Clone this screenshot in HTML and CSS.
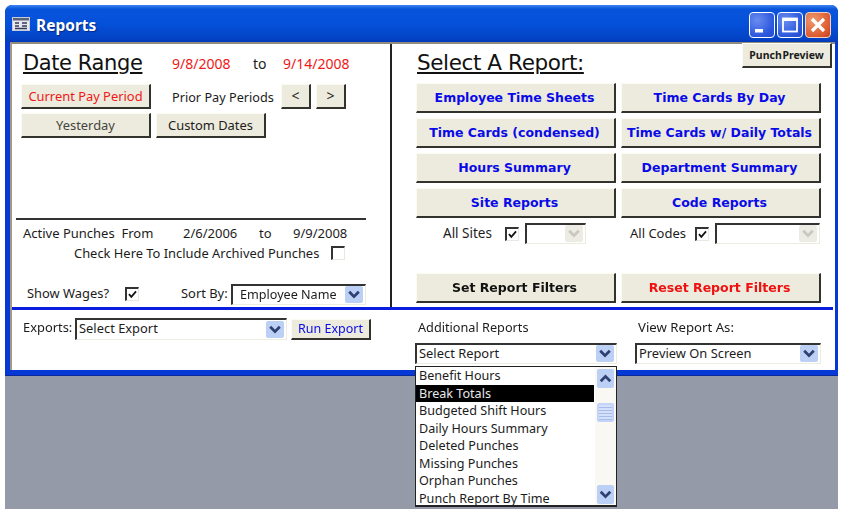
FILE: index.html
```html
<!DOCTYPE html>
<html lang="en">
<head>
<meta charset="utf-8">
<title>Reports</title>
<link rel="stylesheet" href="styles.css">
</head>
<body>
<svg class="defs" width="0" height="0" aria-hidden="true">
  <symbol id="chev-down" viewBox="0 0 16 16"><path d="M3.5 5.5 8 10l4.500-4.500" fill="none" stroke="currentColor" stroke-width="2.600"/></symbol>
  <symbol id="chev-up" viewBox="0 0 16 16"><path d="M3.500 10.500 8 6l4.500 4.500" fill="none" stroke="currentColor" stroke-width="2.600"/></symbol>
  <symbol id="tick" viewBox="0 0 14 14"><path d="M2.500 6.500 5.500 10 11.500 3" fill="none" stroke="#111" stroke-width="2.200"/></symbol>
</svg>
<main class="desktop">
  <section class="window">
    <header class="titlebar">
      <svg class="app-icon" viewBox="0 0 18 14" aria-hidden="true"><rect x=".5" y=".5" width="17" height="13" fill="#e8e8f0" stroke="#c8ccd8"/><rect x="1" y="1" width="16" height="2.500" fill="#5a6478"/><path d="M3 6h4M3 9h4M10 6h5M10 9h5M3 11.500h12" stroke="#333c55" stroke-width="1.300"/></svg>
      <h1 class="title">Reports</h1>
      <div class="win-buttons">
        <span class="win-btn win-min"><svg viewBox="0 0 24 24"><rect x="5" y="16" width="8" height="3.500" fill="#fff"/></svg></span>
        <span class="win-btn win-max"><svg viewBox="0 0 24 24"><rect x="5" y="5.500" width="14" height="13" fill="none" stroke="#fff" stroke-width="1.800"/><rect x="5" y="5" width="14" height="3" fill="#fff"/></svg></span>
        <span class="win-btn win-close"><svg viewBox="0 0 24 24"><path d="M6 6l12 12M18 6 6 18" stroke="#fff" stroke-width="3.200"/></svg></span>
      </div>
    </header>
    <div class="client">
      <div class="top">
        <div class="left-panel">
          <div class="date-head">
            <h2 class="heading date-title">Date Range</h2>
            <span class="red date-from">9/8/2008</span>
            <span class="date-to">to</span>
            <span class="red date-end">9/14/2008</span>
          </div>
          <div class="row row-pay">
            <button class="btn btn-wide red">Current Pay Period</button>
            <span class="prior">Prior Pay Periods</span>
            <button class="btn btn-arrow">&lt;</button>
            <button class="btn btn-arrow">&gt;</button>
          </div>
          <div class="row row-days">
            <button class="btn btn-wide muted">Yesterday</button>
            <button class="btn btn-custom">Custom Dates</button>
          </div>
          <div class="punches">
            <div class="active">
              <span class="active-label">Active Punches&nbsp; From</span>
              <span class="active-from">2/6/2006</span>
              <span class="active-to">to</span>
              <span>9/9/2008</span>
            </div>
            <div class="archive">
              <span>Check Here To Include Archived Punches</span>
              <span class="check"></span>
            </div>
          </div>
          <div class="sort-row">
            <span class="wages">Show Wages?</span>
            <span class="check checked"><svg viewBox="0 0 14 14"><use href="#tick"/></svg></span>
            <span class="sort-label">Sort By:</span>
            <div class="combo combo-sort"><span>Employee Name</span><i class="drop"><svg><use href="#chev-down"/></svg></i></div>
          </div>
        </div>
        <div class="right-panel">
          <div class="report-head">
            <h2 class="heading report-title">Select A Report:</h2>
            <button class="btn btn-preview">Punch Preview</button>
          </div>
          <div class="report-grid">
            <button class="btn btn-report">Employee Time Sheets</button>
            <button class="btn btn-report">Time Cards By Day</button>
            <button class="btn btn-report">Time Cards (condensed)</button>
            <button class="btn btn-report">Time Cards w/ Daily Totals</button>
            <button class="btn btn-report">Hours Summary</button>
            <button class="btn btn-report">Department Summary</button>
            <button class="btn btn-report">Site Reports</button>
            <button class="btn btn-report">Code Reports</button>
          </div>
          <div class="filter-grid">
            <div class="filter filter-sites">
              <span class="filter-label">All Sites</span>
              <span class="check checked"><svg viewBox="0 0 14 14"><use href="#tick"/></svg></span>
              <div class="combo combo-off"><i class="drop drop-off"><svg><use href="#chev-down"/></svg></i></div>
            </div>
            <div class="filter filter-codes">
              <span class="filter-label">All Codes</span>
              <span class="check checked"><svg viewBox="0 0 14 14"><use href="#tick"/></svg></span>
              <div class="combo combo-off combo-codes"><i class="drop drop-off"><svg><use href="#chev-down"/></svg></i></div>
            </div>
          </div>
          <div class="set-grid">
            <button class="btn btn-report btn-set">Set Report Filters</button>
            <button class="btn btn-report btn-reset">Reset Report Filters</button>
          </div>
        </div>
      </div>
      <div class="bottom">
        <div class="exports">
          <span class="exports-label">Exports:</span>
          <div class="combo combo-export"><span>Select Export</span><i class="drop"><svg><use href="#chev-down"/></svg></i></div>
          <button class="btn btn-run">Run Export</button>
        </div>
        <div class="additional">
          <span class="field-label">Additional Reports</span>
          <div class="combo combo-report"><span>Select Report</span><i class="drop"><svg><use href="#chev-down"/></svg></i></div>
          <div class="listbox">
            <ul class="list-items">
              <li>Benefit Hours</li>
              <li class="selected">Break Totals</li>
              <li>Budgeted Shift Hours</li>
              <li>Daily Hours Summary</li>
              <li>Deleted Punches</li>
              <li>Missing Punches</li>
              <li>Orphan Punches</li>
              <li>Punch Report By Time</li>
            </ul>
            <div class="scrollbar">
              <i class="drop scroll-btn"><svg><use href="#chev-up"/></svg></i>
              <i class="scroll-thumb"></i>
              <i class="drop scroll-btn scroll-end"><svg><use href="#chev-down"/></svg></i>
            </div>
          </div>
        </div>
        <div class="view-as">
          <span class="field-label field-view">View Report As:</span>
          <div class="combo combo-view"><span>Preview On Screen</span><i class="drop"><svg><use href="#chev-down"/></svg></i></div>
        </div>
      </div>
    </div>
  </section>
  <div class="workspace"></div>
</main>
</body>
</html>
```

FILE: styles.css
```css
* { box-sizing: border-box; }
html, body { margin: 0; padding: 0; background: #fff; }
body { width: 844px; height: 509px; overflow: hidden; font: 12.900px/1.2 "Noto Sans", Tahoma, sans-serif; color: #1c1c1c; }
.defs { position: absolute; }
h1, h2, ul { margin: 0; padding: 0; }
.desktop { padding: 5px 6px 0 5px; height: 509px; display: flex; flex-direction: column; filter: blur(.35px); }
.window { height: 371px; display: flex; flex-direction: column; background: #0638d6; border-radius: 7px 7px 0 0; padding: 0 3px 5px 5px; border-bottom: 1px solid #0a2a9a; }
.titlebar { height: 37px; margin: 0 -3px 0 -5px; padding: 3px 7px 0 7px; display: flex; align-items: center; border-radius: 7px 7px 0 0; background: linear-gradient(#3f86f0 0, #0a54dc 4px, #0450d8 20px, #0342c4 34px, #0438b8 37px); }
.app-icon { width: 18px; height: 14px; margin: -3px 6px 0 0; }
.title { font: bold 15.500px/1 "Noto Sans", sans-serif; color: #fff; text-shadow: 1px 1px 1px #0a2a80; padding-top: 2px; }
.win-buttons { margin-left: auto; display: flex; gap: 2px; }
.win-btn { width: 26px; height: 26px; border: 1px solid #fff; border-radius: 4px; display: block; }
.win-btn svg { display: block; width: 24px; height: 24px; }
.win-min, .win-max { background: radial-gradient(circle at 30% 30%, #6a8cf0, #2a56dc 70%, #2a4cc8); }
.win-close { background: radial-gradient(circle at 30% 30%, #ee9a70, #dc5a30 70%, #c04020); border-color: #f4d0c0; }

.client { flex: 1; background: #fff; border-top: 2px solid #8f8c7e; border-left: 2px solid #a59a7e; display: flex; flex-direction: column; }
.top { height: 266px; margin-right: 2px; display: flex; border-bottom: 3px solid #0a1ee0; }
.left-panel { width: 380px; border-right: 2px solid #222; padding: 0 0 0 4px; display: flex; flex-direction: column; }
.right-panel { flex: 1; padding: 0 0 0 24px; display: flex; flex-direction: column; }
.heading { font: normal 22px/1 "DejaVu Sans", sans-serif; color: #111; text-decoration: underline; text-decoration-thickness: 2px; text-underline-offset: 2px; white-space: nowrap; }

.date-head { height: 37px; display: flex; align-items: center; padding-top: 1px; }
.date-title { width: 125px; margin-left: 7px; font-size: 21px; letter-spacing: -.4px; }
.date-from { margin-left: 24px; width: 81px; }
.date-to { width: 30px; }
.red { color: #f01818; }
.date-head .red, .date-to { font-size: 14px; padding-top: 2px; }

.btn { margin: 0; padding: 0; display: block; background: #ecebdd; font: 12.900px/1 "Noto Sans", sans-serif; color: #1c1c1c; border: 0; border-top: 1px solid #fbfbf4; border-left: 1px solid #fbfbf4; border-right: 2px solid #33332d; border-bottom: 2px solid #33332d; white-space: nowrap; }
.row { display: flex; align-items: center; padding-left: 5px; }
.row-pay { height: 25px; margin-top: 3px; }
.row-days { height: 25px; margin-top: 4px; gap: 5px; }
.btn-wide { width: 130px; height: 25px; }
.btn.red { color: #f01818; }
.muted { color: #45453d; }
.prior { margin-left: 21px; width: 109px; font-size: 12.700px; padding-top: 3px; }
.btn-arrow { width: 30px; height: 25px; margin-right: 5px; font-size: 14px; }
.btn-custom { width: 110px; height: 25px; }

.punches { margin-top: 80px; border-top: 2px solid #333; width: 350px; padding-top: 6px; }
.active { display: flex; padding-left: 7px; font-size: 13px; white-space: nowrap; }
.active-label { width: 160px; }
.active-from { width: 76px; }
.active-to { width: 34px; }
.archive { display: flex; align-items: center; padding-left: 58px; margin-top: 4px; white-space: nowrap; }
.archive .check { margin-left: 12px; }
.check { flex: none; width: 14px; height: 14px; display: block; border: 1px solid #e8e8e0; border-top: 2px solid #333; border-left: 2px solid #333; background: #fff; }
.check svg { display: block; width: 11px; height: 11px; }
.sort-row { display: flex; align-items: center; height: 24px; margin-top: 21px; padding-left: 11px; white-space: nowrap; }
.wages { width: 98px; }
.sort-label { margin-left: 42px; width: 50px; }

.combo { position: relative; height: 21px; padding: 0 0 1px 2px; display: flex; align-items: center; background: #fff; border-top: 2px solid #333; border-left: 2px solid #333; border-right: 1px solid #ececdf; border-bottom: 1px solid #ececdf; white-space: nowrap; }
.combo .drop { margin-left: auto; margin-right: 2px; }
.drop { flex: none; display: block; width: 18px; height: 17px; border-radius: 2px; background: #bcd0f6; color: #2e3f70; }
.drop svg { display: block; width: 100%; height: 100%; }
.drop-off { background: #ecece4; color: #c8c8c0; }
.combo-sort { width: 135px; padding-left: 7px; font-size: 12.600px; }

.report-head { height: 39px; display: flex; justify-content: space-between; align-items: flex-start; }
.report-title { margin: 8px 0 0 1px; font-size: 21.500px; letter-spacing: -.4px; }
.btn-preview { width: 90px; height: 25px; margin: -1px 1px 0 0; font: bold 10.500px/1 "Noto Sans", sans-serif; word-spacing: -2px; }
.report-grid, .set-grid { display: grid; grid-template-columns: 200px 200px; gap: 5px; }
.btn-report { height: 30px; padding: 1px 2px 0 0; color: #0a0ae8; font: bold 12.500px/1 "DejaVu Sans", sans-serif; }
.filter-grid { display: flex; height: 25px; margin-top: 3px; }
.filter { display: flex; align-items: center; font-size: 13.500px; white-space: nowrap; width: 205px; }
.filter-sites .filter-label { margin-left: 27px; width: 62px; }
.filter-sites .combo { margin-left: 6px; width: 61px; }
.filter-codes .filter-label { margin-left: 9px; width: 65px; font-size: 13px; }
.filter-codes .combo { margin-left: 6px; width: 105px; }
.set-grid { margin-top: 27px; }
.btn-set { color: #111; }
.btn-reset { color: #f01010; }

.bottom { position: relative; flex: 1; display: flex; white-space: nowrap; }
.exports { width: 403px; display: flex; align-items: flex-start; padding: 8px 0 0 11px; }
.exports-label { width: 52px; padding-top: 2px; }
.combo-export { width: 212px; height: 22px; }
.btn-run { width: 80px; height: 21px; margin: 1px 0 0 4px; color: #0a0ae8; font-size: 12.500px; }
.additional { position: relative; width: 220px; }
.field-label { display: block; padding: 10px 0 0 3px; height: 33px; font-size: 12.700px; }
.field-view { font-size: 13.200px; }
.combo-report { width: 202px; height: 21px; }
.view-as { width: 186px; }
.combo-view { width: 186px; height: 21px; }
.listbox { position: absolute; left: 0; top: 56px; width: 202px; height: 141px; display: flex; background: #fff; border: 1px solid #222; border-bottom-width: 2px; z-index: 2; font-size: 12.600px; }
.list-items { flex: 1; list-style: none; }
.list-items li { height: 17.500px; line-height: 17.500px; padding-left: 3px; margin-right: 1px; }
.list-items .selected { background: #000; color: #e8e8e8; }
.scrollbar { width: 21px; padding: 2px 2px 1px 2px; display: flex; flex-direction: column; background: #faf8f2; }
.scroll-btn { width: 17px; height: 19px; }
.scroll-thumb { display: block; width: 17px; height: 19px; margin-top: 15px; border-radius: 2px; background: repeating-linear-gradient(#d4e0fa 0 2px, #a8bcea 2px 3px); border: 2px solid #c4d4f8; }
.scroll-end { margin-top: auto; }
.workspace { flex: 1; background: #949aa8; margin-top: 0; }
```
